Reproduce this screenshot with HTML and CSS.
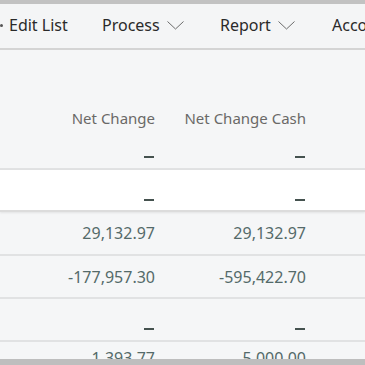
FILE: index.html
```html
<!DOCTYPE html>
<html lang="en">
<head>
  <meta charset="UTF-8" />
  <meta name="viewport" content="width=device-width, initial-scale=1.0"/>
  <title>Chart of Accounts</title>
  <link rel="stylesheet" href="styles.css">
</head>
<body>
  <div class="page">
    <div class="top-strip"></div>

    <nav class="toolbar">
      <span class="tool tool-edit"><span class="dot"></span>Edit List</span>
      <span class="tool tool-process">Process
        <svg class="chev" width="17" height="9" viewBox="0 0 17 9"><path d="M0.5 0.5 L8.5 8 L16.5 0.5" fill="none" stroke="#6b6b6b" stroke-width="1"/></svg>
      </span>
      <span class="tool tool-report">Report
        <svg class="chev" width="17" height="9" viewBox="0 0 17 9"><path d="M0.5 0.5 L8.5 8 L16.5 0.5" fill="none" stroke="#6b6b6b" stroke-width="1"/></svg>
      </span>
      <span class="tool tool-acc">Account</span>
    </nav>

    <div class="grid-area">
      <div class="row head">
        <div class="cell">Net Change</div>
        <div class="cell">Net Change Cash</div>
      </div>

      <div class="row">
        <div class="cell empty"><span class="dash"></span></div>
        <div class="cell empty"><span class="dash"></span></div>
      </div>

      <div class="row selected">
        <div class="cell empty"><span class="dash"></span></div>
        <div class="cell empty"><span class="dash"></span></div>
      </div>

      <div class="row tall">
        <div class="cell">29,132.97</div>
        <div class="cell">29,132.97</div>
      </div>

      <div class="row">
        <div class="cell">-177,957.30</div>
        <div class="cell">-595,422.70</div>
      </div>

      <div class="row">
        <div class="cell empty"><span class="dash"></span></div>
        <div class="cell empty"><span class="dash"></span></div>
      </div>

      <div class="row last">
        <div class="cell">1,393.77</div>
        <div class="cell">5,000.00</div>
      </div>
    </div>

    <div class="bottom-strip"></div>
  </div>
</body>
</html>
```

FILE: styles.css
```css
* {
  box-sizing: border-box;
}

html, body {
  margin: 0;
  padding: 0;
  width: 100%;
  height: 100%;
  background: #f5f6f7;
  font-family: 'Noto Sans', 'Open Sans', sans-serif;
}

.page {
  height: 365px;
  display: flex;
  flex-direction: column;
  overflow: hidden;
}

.top-strip {
  height: 4px;
  flex: none;
  background: #c2c2c2;
}

.bottom-strip {
  height: 6px;
  flex: none;
  background: #bebebe;
}

/* toolbar */
.toolbar {
  height: 46px;
  flex: none;
  display: flex;
  align-items: center;
  padding-bottom: 2px;
  background: #f4f5f6;
  border-bottom: 2px solid #d4d4d4;
  white-space: nowrap;
  overflow: hidden;
  font-size: 16px;
  color: #2a2a2a;
}

.tool {
  display: flex;
  align-items: center;
  flex: none;
}

.tool-edit {
  width: 102px;
}

.tool-edit .dot {
  width: 3px;
  height: 3px;
  border-radius: 50%;
  background: #555;
  margin-right: 6px;
}

.tool-process {
  width: 118px;
}

.tool-report {
  width: 112px;
}

.chev {
  margin-left: 7px;
  margin-top: 1px;
}

/* grid */
.grid-area {
  flex: 1;
  overflow: hidden;
  background: #f5f6f7;
}

.row {
  display: grid;
  grid-template-columns: 155px 151px;
  height: 43px;
  border-bottom: 2px solid #e1e2e3;
  color: #546a69;
  font-size: 16px;
}

.row.head {
  height: 77px;
  border-bottom: none;
  color: #6a6967;
  font-size: 15px;
  line-height: 18px;
  align-items: end;
  padding-bottom: 0;
}

.row.selected {
  background: #ffffff;
  height: 42px;
  border-bottom: 2px solid #dcdcdc;
  box-shadow: 0 1px 2px rgba(0, 0, 0, 0.08);
}

.row.selected .cell.empty {
  padding-bottom: 9px;
}

.row.tall {
  height: 44px;
}

.row.last {
  line-height: 22px;
  padding-top: 5px;
  align-items: start;
}

.cell {
  display: flex;
  align-items: center;
  justify-content: flex-end;
  white-space: nowrap;
}

.row.head .cell {
  align-items: flex-end;
}

.row.last .cell {
  align-items: flex-start;
}

.cell.empty {
  align-items: flex-end;
  padding-bottom: 10px;
}

.dash {
  width: 10px;
  height: 2px;
  background: #45524f;
  margin-right: 1px;
}
```
